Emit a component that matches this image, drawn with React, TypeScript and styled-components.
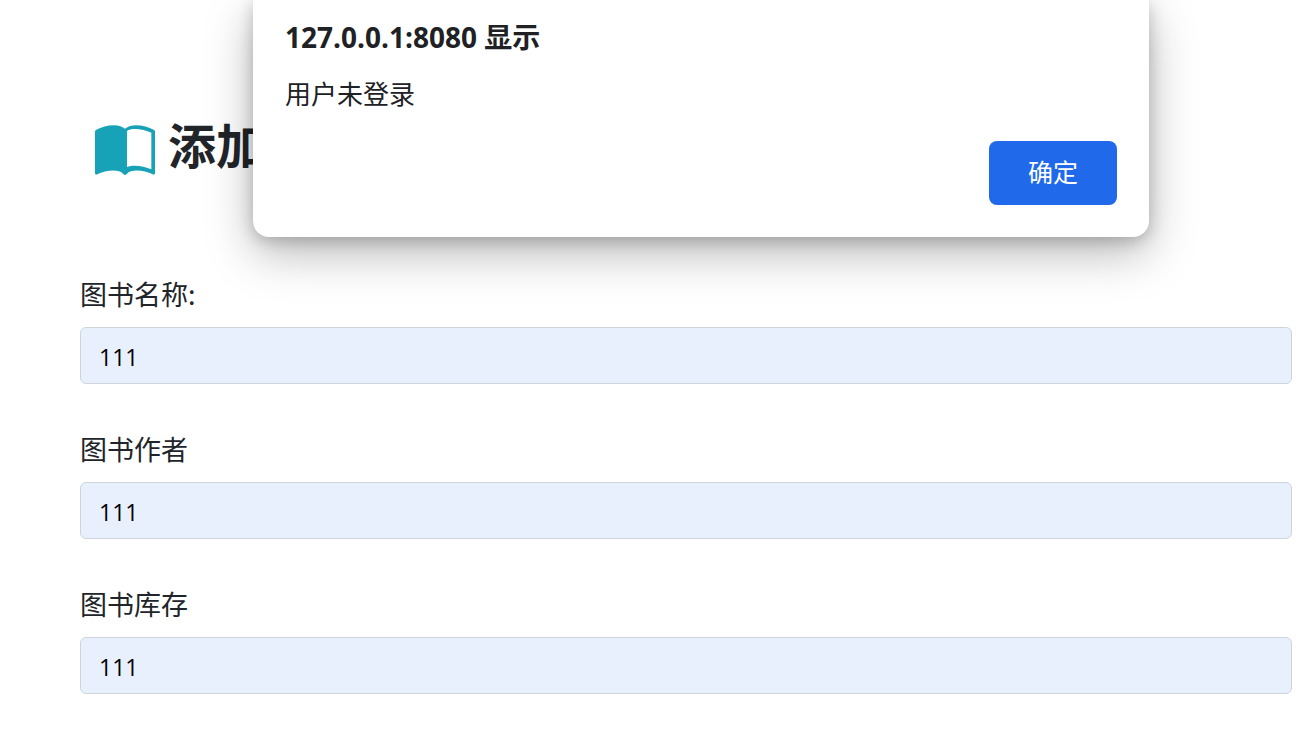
import React from "react";
import styled, { createGlobalStyle } from "styled-components";

const GlobalStyle = createGlobalStyle`
  *, *::before, *::after { box-sizing: border-box; }
  body {
    margin: 0;
    background: #ffffff;
    color: #212529;
    font-family: "Open Sans", "Noto Sans CJK SC", sans-serif;
  }
`;

const Page = styled.main`
  padding: 103px 23px 45px 80px;
`;

const PageTitle = styled.h2`
  display: flex;
  align-items: center;
  gap: 13px;
  margin: 0 0 91px;
  padding-left: 15px;
  font-family: "Noto Sans CJK SC", sans-serif;
  font-size: 48px;
  line-height: 80px;
  font-weight: 700;
  white-space: nowrap;
`;

const BookIcon = styled.svg`
  flex: none;
  width: 60px;
  height: 50px;
  margin-top: 14px;
  color: #17a2b8;
`;

const Form = styled.form`
  display: flex;
  flex-direction: column;
  gap: 45px;
`;

const Field = styled.div`
  display: flex;
  flex-direction: column;
  gap: 13px;
`;

const Label = styled.label`
  font-family: "Noto Sans CJK SC", sans-serif;
  font-size: 27px;
  line-height: 40px;
`;

const TextInput = styled.input`
  width: 100%;
  height: 57px;
  padding: 2px 18px 0;
  border: 1px solid #ced4da;
  border-radius: 6px;
  background: #e8f0fe;
  color: #000000;
  font-family: "Open Sans", sans-serif;
  font-size: 23px;
  outline: none;
`;

const AlertDialog = styled.section`
  position: absolute;
  top: 0;
  left: 253px;
  width: 896px;
  max-width: calc(100% - 253px);
  padding: 17px 32px 32px;
  display: flex;
  flex-direction: column;
  border-radius: 0 0 16px 16px;
  background: #ffffff;
  color: #202124;
  box-shadow: 0 16px 48px rgba(0, 0, 0, 0.28), 0 4px 16px rgba(0, 0, 0, 0.2);
`;

const AlertTitle = styled.h1`
  margin: 0;
  font-size: 28px;
  line-height: 40px;
  font-weight: 700;
`;

const AlertMessage = styled.p`
  margin: 17px 0 27px;
  font-size: 26px;
  line-height: 40px;
`;

const ConfirmButton = styled.button`
  align-self: flex-end;
  width: 128px;
  height: 64px;
  padding: 0 0 4px;
  border: 0;
  border-radius: 8px;
  background: #2069eb;
  color: #ffffff;
  font-family: "Noto Sans CJK SC", sans-serif;
  font-size: 25px;
  cursor: pointer;
`;

const fields = [
  { id: "bookName", label: "图书名称:" },
  { id: "bookAuthor", label: "图书作者" },
  { id: "bookStock", label: "图书库存" },
];

export default function App() {
  return (
    <>
      <GlobalStyle />
      <Page>
        <PageTitle>
          <BookIcon viewBox="0 0 180 150" fill="currentColor" aria-hidden="true">
            <path
              fillRule="evenodd"
              d="M0 20Q0 16 4 14C28 2 68-8 90 11C112-8 152 2 176 14Q180 16 180 20V145Q179 151 173 148C150 137 110 130 95 147Q90 153 85 147C70 130 30 137 7 148Q1 151 0 145ZM96 18V126C116 118 147 123 169 133V23C147 14 112 7 96 18Z"
            />
          </BookIcon>
          添加图书
        </PageTitle>
        <Form>
          {fields.map((field) => (
            <Field key={field.id}>
              <Label htmlFor={field.id}>{field.label}</Label>
              <TextInput id={field.id} name={field.id} type="text" defaultValue="111" />
            </Field>
          ))}
        </Form>
      </Page>
      <AlertDialog role="alertdialog" aria-labelledby="alert-title" aria-describedby="alert-message">
        <AlertTitle id="alert-title">127.0.0.1:8080 显示</AlertTitle>
        <AlertMessage id="alert-message">用户未登录</AlertMessage>
        <ConfirmButton type="button">确定</ConfirmButton>
      </AlertDialog>
    </>
  );
}
